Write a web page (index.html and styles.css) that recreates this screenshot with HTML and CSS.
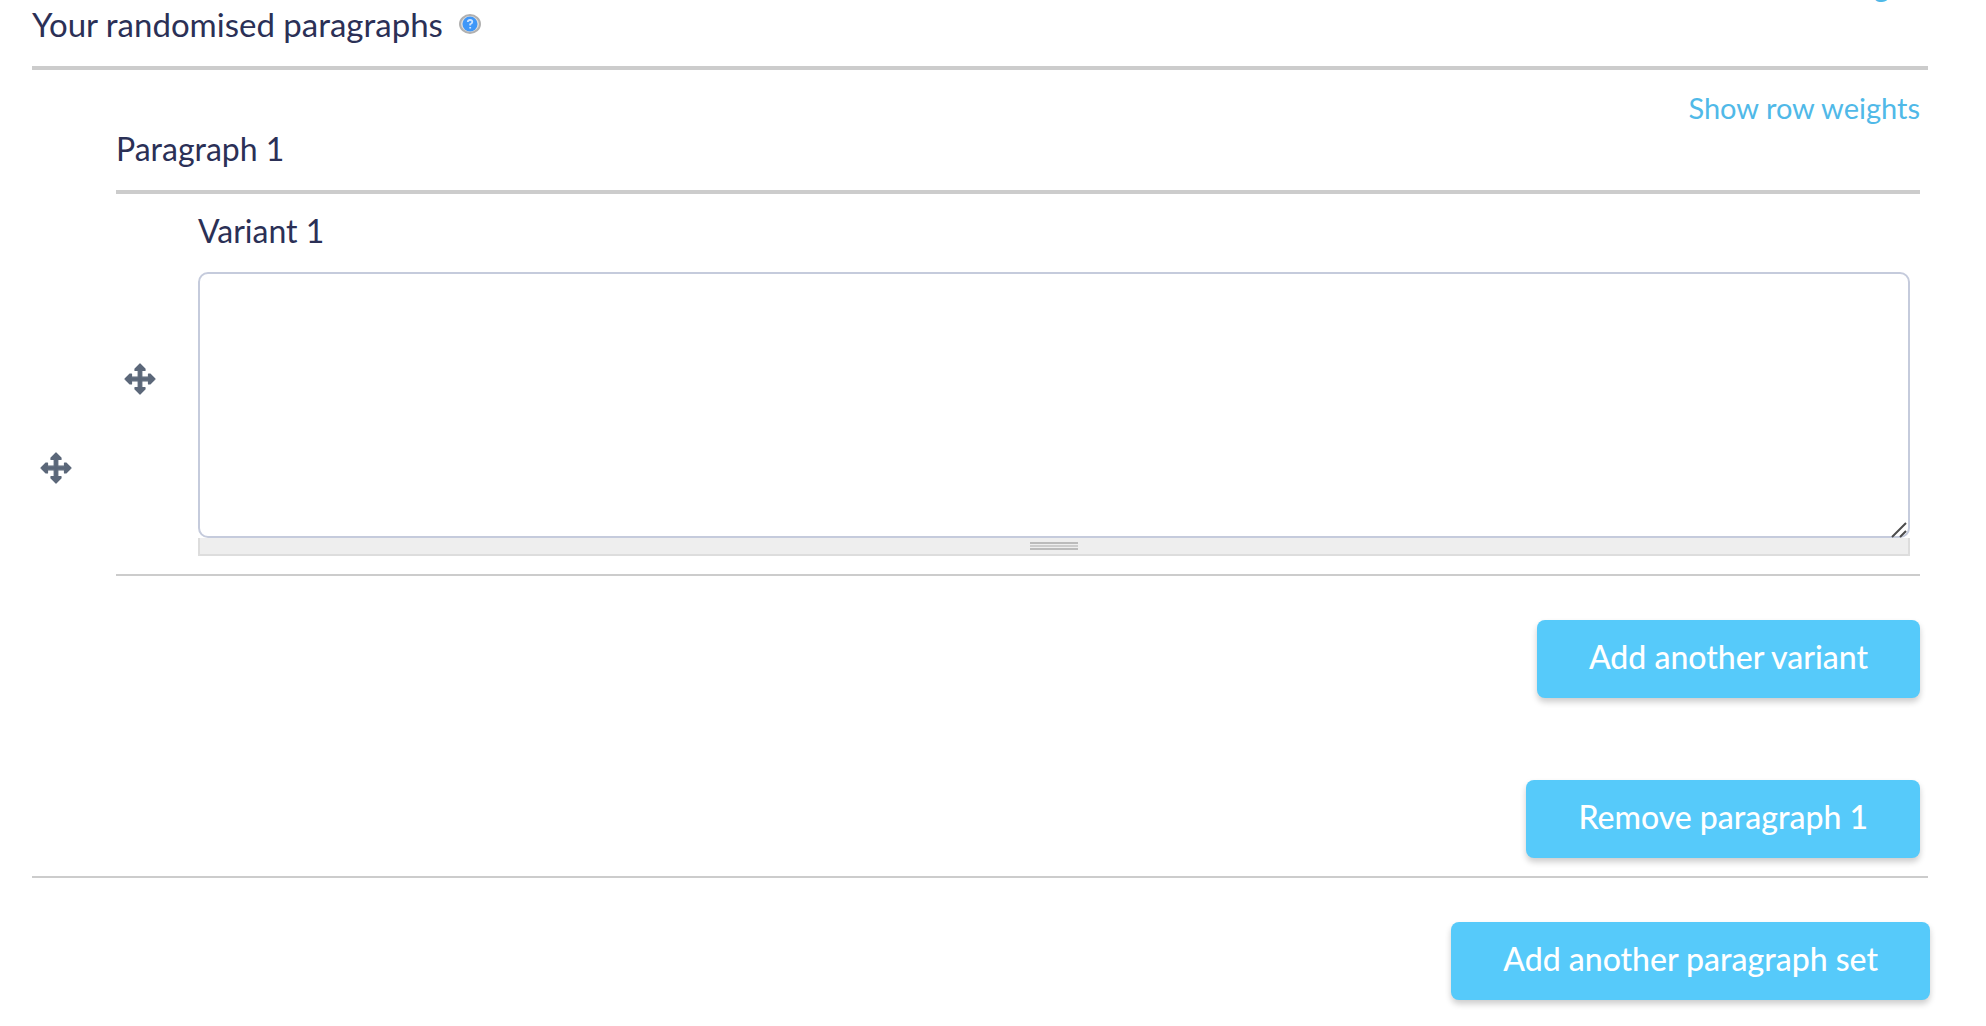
FILE: index.html
```html
<!DOCTYPE html>
<html lang="en">
<head>
<meta charset="utf-8">
<title>Randomised paragraphs</title>
<meta name="viewport" content="width=device-width, initial-scale=1">
<link rel="stylesheet" href="styles.css">
</head>
<body>
<svg class="sprite" aria-hidden="true">
  <symbol id="move" viewBox="0 0 32 32">
    <path d="M16 1 L21 6 V7.500 H17.800 V14.200 H24.500 V11 H26 L31 16 L26 21 H24.500 V17.800 H17.800 V24.500 H21 V26 L16 31 L11 26 V24.500 H14.200 V17.800 H7.500 V21 H6 L1 16 L6 11 H7.500 V14.200 H14.200 V7.500 H11 V6 Z" stroke-width="1.200" stroke-linejoin="round"/>
  </symbol>
</svg>
<form class="page">
  <div class="previous-weights"><a class="weights" href="#">Show row weights</a></div>
  <section class="field">
    <h2 class="title title-main">Your randomised paragraphs
      <a class="help" href="#" aria-label="Help">
        <svg viewBox="0 0 22 20" width="22" height="20">
          <ellipse cx="11" cy="10" rx="10" ry="9" fill="#dcdcdc" stroke="#b0b0b0" stroke-width="2"/>
          <ellipse cx="11" cy="10" rx="7.500" ry="7.500" fill="#3f97f8"/>
          <path d="M8.800 8 Q9 6 11 6 Q13.400 6 13.300 8 Q13.200 9.300 11.200 10.200 V11.500 M11.200 13 V14.500" fill="none" stroke="#cde4ff" stroke-width="1.800"/>
        </svg>
      </a>
    </h2>
    <div class="row row-outer">
      <a class="handle" href="#" aria-label="Move paragraph"><svg><use href="#move"/></svg></a>
      <div class="content">
        <div class="toggle"><a class="weights" href="#">Show row weights</a></div>
        <h3 class="title title-sub">Paragraph 1</h3>
        <div class="row row-inner">
          <a class="handle" href="#" aria-label="Move variant"><svg><use href="#move"/></svg></a>
          <div class="content variant">
            <label class="title label" for="variant-1">Variant 1</label>
            <div class="editor">
              <textarea class="text" id="variant-1"></textarea>
              <svg class="resizer" viewBox="0 0 16 16" aria-hidden="true"><path d="M1 15 L15 1 M9 15 L15 9"/></svg>
            </div>
            <div class="grippie"><div class="grip"></div></div>
          </div>
        </div>
        <div class="actions actions-variant"><button class="button" type="button">Add another variant</button></div>
        <div class="actions actions-remove"><button class="button" type="button">Remove paragraph 1</button></div>
      </div>
    </div>
    <div class="actions actions-set"><button class="button" type="button">Add another paragraph set</button></div>
  </section>
</form>
</body>
</html>
```
FILE: styles.css
```css
* { box-sizing: border-box; }
body {
  margin: 0;
  background: #fff;
  color: #2b3056;
  font-family: Lato, "Liberation Sans", sans-serif;
  font-size: 32px;
  line-height: 40px;
}
.sprite { display: none; }
.page { padding: 0 56px 24px 32px; }
.previous-weights {
  display: flex;
  align-items: flex-end;
  justify-content: flex-end;
  height: 2px;
  padding-right: 2px;
  overflow: hidden;
}
.previous-weights .weights { margin-bottom: -4px; }
.field { padding-top: 4px; }
.title { margin: 0; font-size: 32px; font-weight: 400; line-height: 40px; }
.title-main {
  display: flex;
  gap: 16px;
  height: 64px;
  margin-right: 2px;
  border-bottom: 4px solid #ccc;
  font-size: 33px;
  line-height: 36px;
}
.help { height: 20px; margin-top: 8px; line-height: 0; }
.row { display: grid; }
.row-outer {
  grid-template-columns: 84px 1fr;
  margin-right: 2px;
  padding: 18px 8px 18px 0;
  border-bottom: 2px solid #ccc;
}
.row-inner {
  grid-template-columns: 82px 1fr;
  padding: 17px 10px 18px 0;
  border-top: 4px solid #ccc;
  border-bottom: 2px solid #ccc;
}
.handle {
  align-self: center;
  width: 32px;
  height: 32px;
  margin: 0 0 10px 8px;
}
.handle svg { display: block; width: 32px; height: 32px; fill: #5b6779; stroke: #5b6779; }
.content { min-width: 0; }
.toggle { display: flex; justify-content: flex-end; }
.weights { color: #50b9e8; font-size: 29px; line-height: 40px; text-decoration: none; }
.title-sub { padding: 1px 0 21px; }
.label { display: block; margin-bottom: 21px; }
.editor { position: relative; }
.text {
  display: block;
  width: 100%;
  height: 266px;
  padding: 16px;
  border: 2px solid #c5cbdc;
  border-radius: 10px;
  background: #fff;
  color: inherit;
  font: inherit;
  resize: none;
}
.resizer {
  position: absolute;
  right: 3px;
  bottom: 0;
  width: 16px;
  height: 16px;
  fill: none;
  stroke: #4d4d4d;
  stroke-width: 2;
}
.grippie {
  display: flex;
  justify-content: center;
  height: 18px;
  padding-top: 4px;
  border: 2px solid #ddd;
  border-top: 0;
  background: #eee;
}
.grip {
  width: 48px;
  height: 8px;
  border-top: 2px solid #bbb;
  border-bottom: 2px solid #bbb;
  background: linear-gradient(#eee 1px, #ccc 1px, #ccc 3px, #eee 3px);
}
.actions { display: flex; justify-content: flex-end; }
.actions-variant { padding-top: 44px; }
.actions-remove { padding-top: 82px; }
.actions-set { padding-top: 44px; }
.button {
  height: 78px;
  padding: 0 52px 4px;
  border: 0;
  border-radius: 8px;
  background: #56cafa;
  box-shadow: 0 4px 6px rgba(0, 0, 0, .2);
  color: #fff;
  font-family: inherit;
  font-size: 32px;
  font-weight: 500;
  line-height: 40px;
}
```
